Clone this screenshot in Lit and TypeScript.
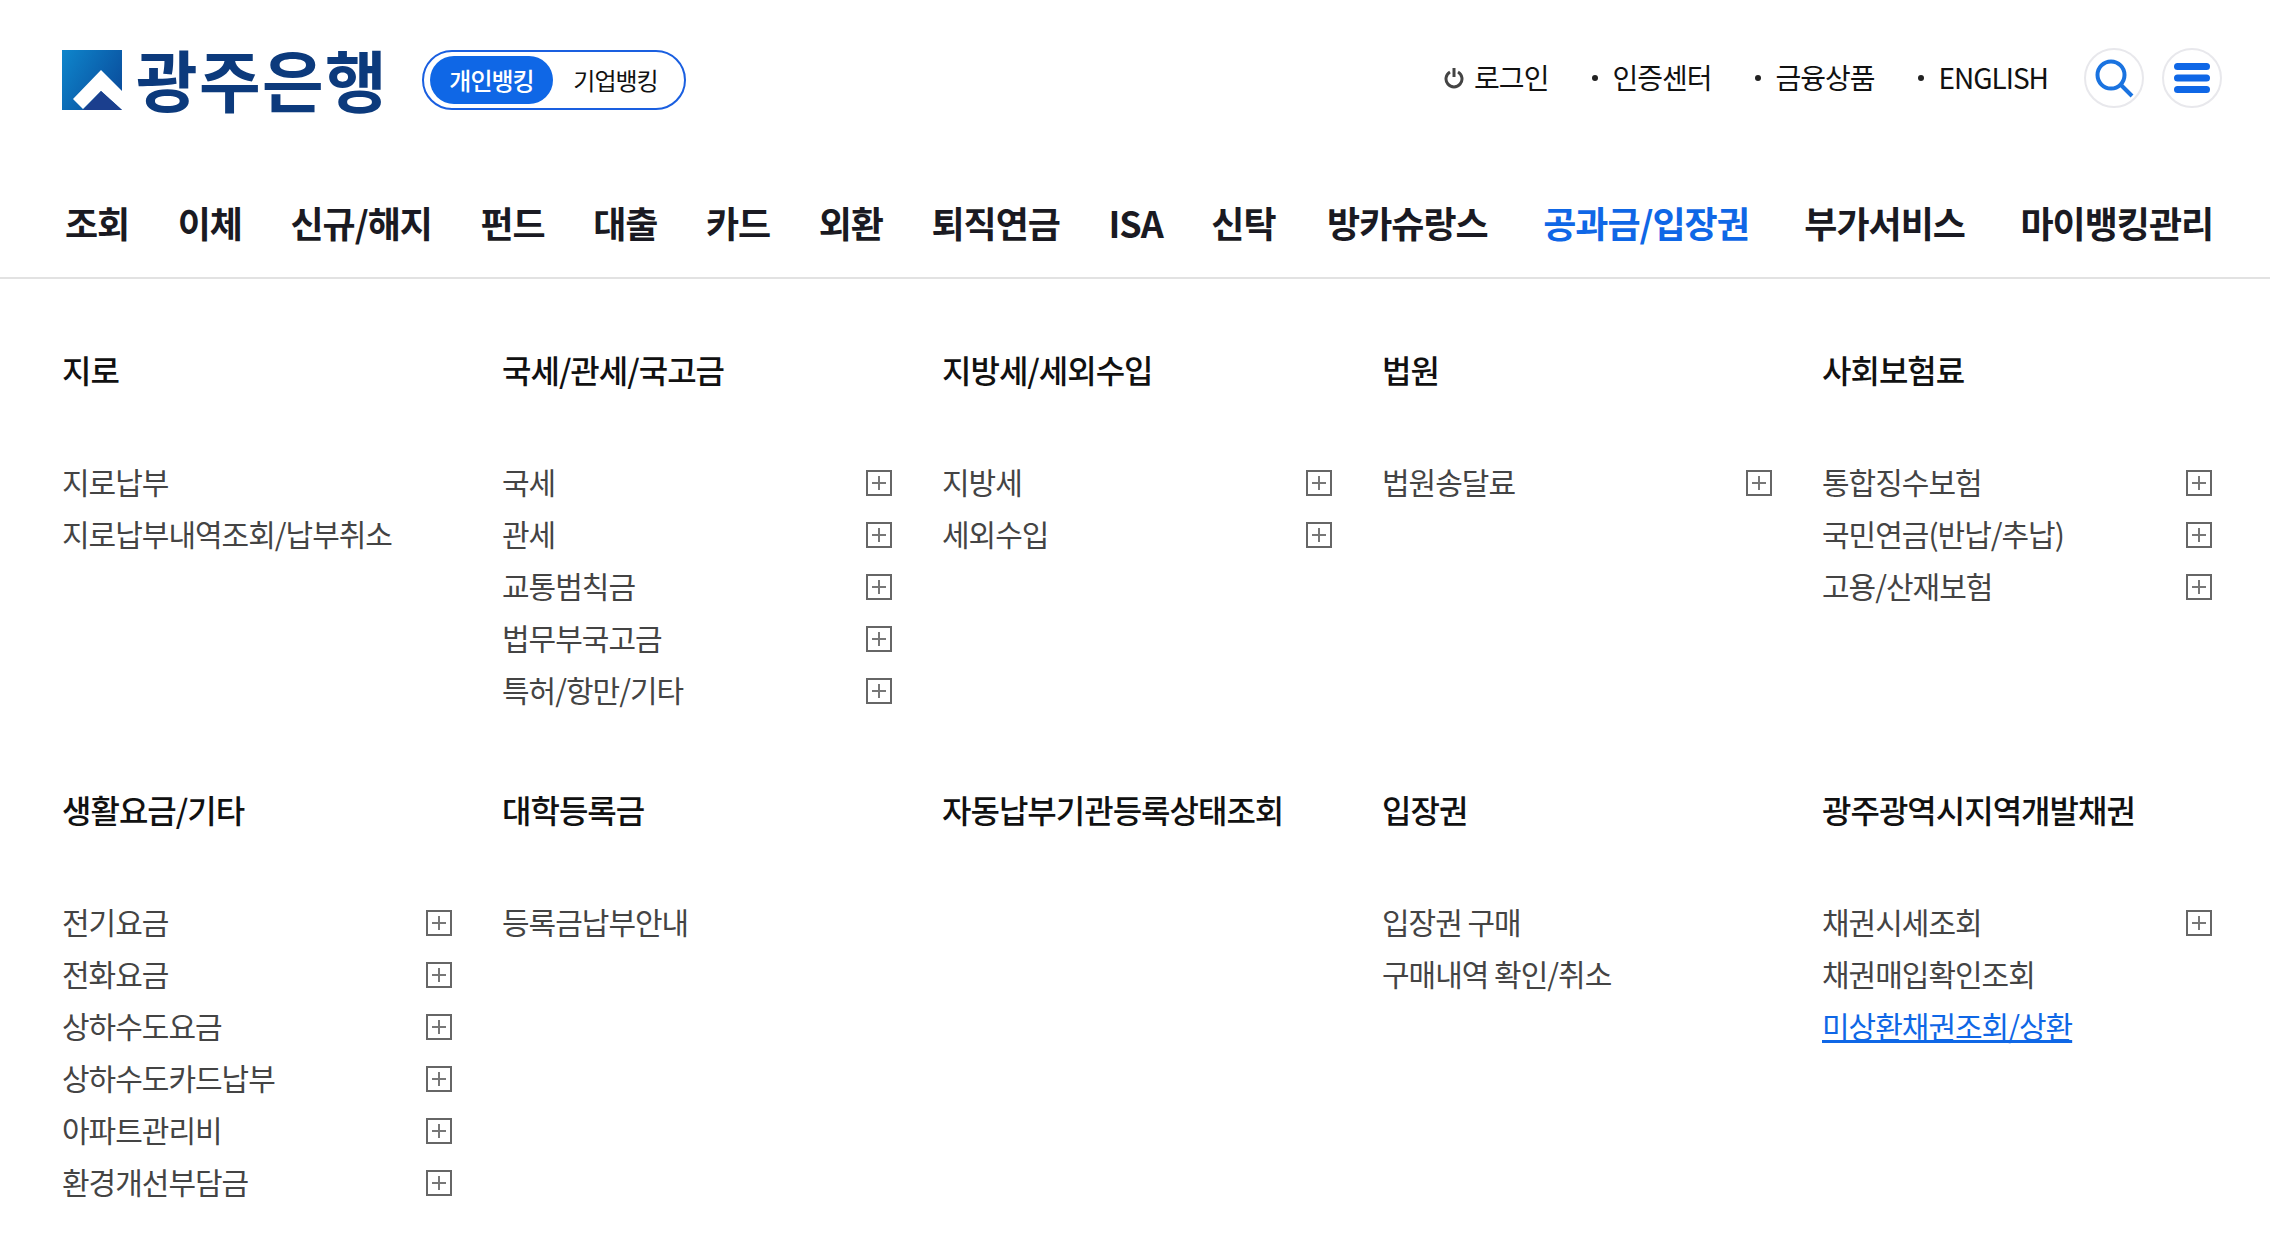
import { LitElement, html, css } from "lit";
import { customElement } from "lit/decorators.js";

type Item = { t: string; plus?: boolean; active?: boolean };
type Sec = { title: string; items: Item[] };
const p = (t: string): Item => ({ t, plus: true });
const n = (t: string): Item => ({ t });

const NAV = ["조회","이체","신규/해지","펀드","대출","카드","외환","퇴직연금","ISA","신탁","방카슈랑스","공과금/입장권","부가서비스","마이뱅킹관리"];
const WIDE = ["공과금/입장권","부가서비스","마이뱅킹관리"];
const SECS: Sec[] = [
  { title: "지로", items: [n("지로납부"), n("지로납부내역조회/납부취소")] },
  { title: "국세/관세/국고금", items: [p("국세"), p("관세"), p("교통범칙금"), p("법무부국고금"), p("특허/항만/기타")] },
  { title: "지방세/세외수입", items: [p("지방세"), p("세외수입")] },
  { title: "법원", items: [p("법원송달료")] },
  { title: "사회보험료", items: [p("통합징수보험"), p("국민연금(반납/추납)"), p("고용/산재보험")] },
  { title: "생활요금/기타", items: [p("전기요금"), p("전화요금"), p("상하수도요금"), p("상하수도카드납부"), p("아파트관리비"), p("환경개선부담금")] },
  { title: "대학등록금", items: [n("등록금납부안내")] },
  { title: "자동납부기관등록상태조회", items: [] },
  { title: "입장권", items: [n("입장권 구매"), n("구매내역 확인/취소")] },
  { title: "광주광역시지역개발채권", items: [p("채권시세조회"), n("채권매입확인조회"), { t: "미상환채권조회/상환", active: true }] },
];

@customElement("app-root")
export class AppRoot extends LitElement {
  static styles = css`
    :host { display: block; width: 2270px; height: 1244px; background: #fff; overflow: hidden;
      font-family: "Noto Sans CJK KR", "Noto Sans", sans-serif; color: #111; }
    .top { display: flex; align-items: center; height: 60px; padding: 50px 48px 0 62px; }
    .logo { display: flex; align-items: center; gap: 14px; width: 360px; }
    .mark { width: 60px; height: 60px; flex: none; display: block; }
    .name { font-size: 67px; line-height: 60px; font-weight: 700; color: #0c3a7c; letter-spacing: 1.4px; white-space: nowrap; margin-bottom: 5px; }
    .pill { display: flex; align-items: center; box-sizing: border-box; width: 264px; height: 60px; border: 2px solid #1a5fe0; border-radius: 30px; padding: 0 6px; }
    .pill span { display: flex; align-items: center; justify-content: center; height: 48px; width: 123px; border-radius: 24px; font-size: 24px; letter-spacing: -1px; padding-bottom: 2px; box-sizing: border-box; }
    .pill .on { background: #0f67e6; color: #fff; font-weight: 500; }
    .pill .off { width: 125px; color: #111; }
    .util { margin-left: auto; margin-bottom: 4px; display: flex; align-items: center; font-size: 28px; letter-spacing: -1px; color: #111; }
    .util .u { display: flex; align-items: center; white-space: nowrap; padding-bottom: 3px; }
    .u.login { gap: 10px; margin-right: 44px; }
    .u.login svg { margin-top: 3px; }
    .u.dot { gap: 14px; margin-right: 44px; }
    .u.dot::before { content: ""; width: 6px; height: 6px; border-radius: 50%; background: #222; margin-top: 3px; }
    .u.dot.last { margin-right: 36px; }
    .round { width: 60px; height: 60px; box-sizing: border-box; border: 2px solid #e8e8ec; border-radius: 50%; display: flex; align-items: center; justify-content: center; background: #fff; flex: none; }
    .round + .round { margin-left: 18px; }
    nav { display: flex; gap: 48.5px; align-items: center; box-sizing: border-box; height: 60px; margin-top: 84px; padding: 0 0 0 65px; font-size: 36px; font-weight: 700; letter-spacing: -1px; color: #1a1a22; white-space: nowrap; }
    nav span { padding-bottom: 5px; }
    nav .ins { margin-left: 3px; }
    nav .wide { margin-left: 7px; }
    nav .act { color: #0f67e6; }
    .line { height: 2px; margin-top: 23px; background: #e2e2e2; }
    .grid { display: grid; grid-template-columns: repeat(5, 390px); column-gap: 50px; padding: 72px 0 0 62px; }
    .sec { height: 440px; }
    h3 { margin: 0; height: 40px; line-height: 36px; font-size: 32px; font-weight: 500; letter-spacing: -1px; color: #111; }
    ul { list-style: none; margin: 66px 0 0; padding: 0; }
    li { display: flex; align-items: center; justify-content: space-between; height: 52px; font-size: 30px; letter-spacing: -1px; color: #444; white-space: nowrap; }
    li span { padding-bottom: 5px; }
    li.active { color: #0f67e6; }
    li.active span { text-decoration: underline; }
    .plus { width: 26px; height: 26px; flex: none; display: block; }
  `;

  private plus() {
    return html`<svg class="plus" viewBox="0 0 26 26"><rect x="1" y="1" width="24" height="24" fill="#fff" stroke="#666" stroke-width="2"/><path d="M13 6v14M6 13h14" stroke="#777" stroke-width="2" fill="none"/></svg>`;
  }

  private navClass(t: string) {
    const cls: string[] = [];
    if (t === "공과금/입장권") cls.push("act");
    if (WIDE.includes(t)) cls.push("wide");
    if (t === "방카슈랑스") cls.push("ins");
    return cls.join(" ");
  }

  render() {
    return html`
      <div class="top">
        <div class="logo">
          <svg class="mark" viewBox="0 0 60 60">
            <defs>
              <linearGradient id="g" x1="0" y1="0" x2="1" y2="0.6"><stop offset="0" stop-color="#0e86cc"/><stop offset="1" stop-color="#0a4f9e"/></linearGradient>
            </defs>
            <rect width="60" height="60" fill="url(#g)"/>
            <path d="M39 20L11 49L21 59L39 41L60 60V41Z" fill="#fff"/>
            <path d="M21 60L39 41L60 60Z" fill="#1b3f8e"/>
          </svg>
          <span class="name">광주은행</span>
        </div>
        <div class="pill"><span class="on">개인뱅킹</span><span class="off">기업뱅킹</span></div>
        <div class="util">
          <span class="u login">
            <svg width="20" height="22" viewBox="0 0 20 22"><path d="M6 5a8 8 0 1 0 8 0" fill="none" stroke="#444" stroke-width="3"/><path d="M10 1v9" stroke="#444" stroke-width="3"/></svg>
            로그인</span>
          <span class="u dot">인증센터</span>
          <span class="u dot">금융상품</span>
          <span class="u dot last">ENGLISH</span>
          <span class="round"><svg width="40" height="40" viewBox="0 0 40 40"><circle cx="17" cy="17" r="13.5" fill="none" stroke="#1a73e0" stroke-width="4"/><path d="M27 27l11 11" stroke="#1a73e0" stroke-width="4"/></svg></span>
          <span class="round"><svg width="36" height="30" viewBox="0 0 36 30"><rect y="0" width="36" height="7" rx="3.5" fill="#0f67e6"/><rect y="11.5" width="36" height="7" rx="3.5" fill="#0f67e6"/><rect y="23" width="36" height="7" rx="3.5" fill="#0f67e6"/></svg></span>
        </div>
      </div>
      <nav>${NAV.map((t) => html`<span class=${this.navClass(t)}>${t}</span>`)}</nav>
      <div class="line"></div>
      <div class="grid">
        ${SECS.map((s) => html`<section class="sec">
          <h3>${s.title}</h3>
          <ul>${s.items.map((i) => html`<li class=${i.active ? "active" : ""}><span>${i.t}</span>${i.plus ? this.plus() : ""}</li>`)}</ul>
        </section>`)}
      </div>
    `;
  }
}
